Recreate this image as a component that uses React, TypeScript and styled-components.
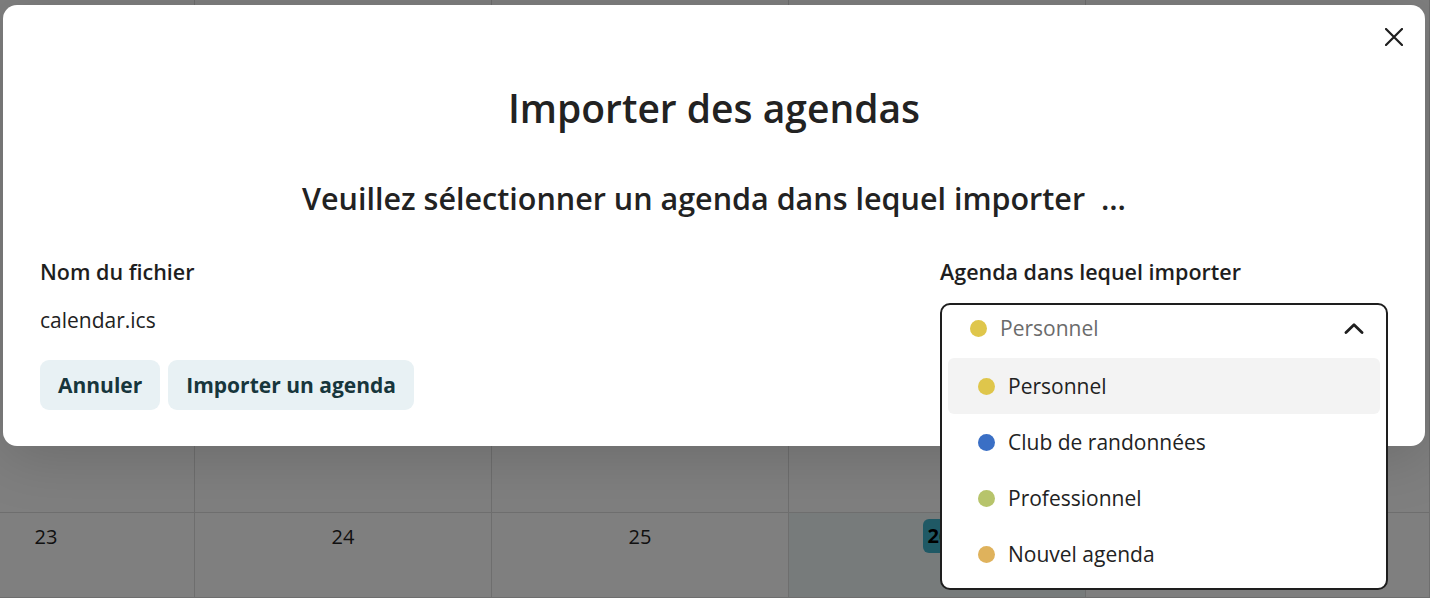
import styled, { createGlobalStyle } from 'styled-components'

const GlobalStyle = createGlobalStyle`
  html, body {
    margin: 0;
    padding: 0;
    background: #ffffff;
  }
  body {
    font-family: 'Open Sans', 'Noto Sans', sans-serif;
    color: #1e1e1e;
  }
  * {
    box-sizing: border-box;
  }
`

type Agenda = { name: string; color: string }

const agendas: Agenda[] = [
  { name: 'Personnel', color: '#dfc64b' },
  { name: 'Club de randonnées', color: '#3a6fc5' },
  { name: 'Professionnel', color: '#b7c46b' },
  { name: 'Nouvel agenda', color: '#dfb25c' },
]

// visible part of the week: the last column only shows its left edge
const days: (number | null)[] = [23, 24, 25, 26, null]
const today = 26

/* calendar behind the dialog */

const Page = styled.div`
  position: relative;
  width: 100vw;
  height: 100vh;
  overflow: hidden;
`

const Calendar = styled.div`
  display: grid;
  grid-template-columns: repeat(4, 297px) 1fr;
  grid-template-rows: 513px 1fr;
  height: 100%;
  margin-left: -102px;
`

const Cell = styled.div<{ $today?: boolean }>`
  display: flex;
  justify-content: center;
  align-items: flex-start;
  padding-top: 12px;
  border-right: 1px solid #dcdcdc;
  border-bottom: 1px solid #dcdcdc;
  background: ${({ $today }) => ($today ? '#eef6f7' : '#ffffff')};
`

const DayNumber = styled.span<{ $today?: boolean }>`
  font-family: 'Open Sans', sans-serif;
  font-size: 20px;
  line-height: 24px;
  color: #222;
  ${({ $today }) =>
    $today &&
    `
    margin-top: -6px;
    margin-left: 4px;
    padding: 5px 5px;
    border-radius: 6px;
    background: #3eb3cb;
    font-weight: 700;
    color: #000;
  `}
`

/* dialog */

const Backdrop = styled.div`
  position: absolute;
  inset: 0;
  background: rgba(0, 0, 0, 0.5);
  padding: 5px 5px 0 3px;
`

const Dialog = styled.div`
  position: relative;
  height: 441px;
  background: #ffffff;
  border-radius: 14px;
  box-shadow: 0 10px 60px rgba(0, 0, 0, 0.16);
  padding: 79px 37px 36px 37px;
  display: flex;
  flex-direction: column;
`

const CloseButton = styled.button`
  position: absolute;
  top: 20px;
  right: 19px;
  width: 24px;
  height: 24px;
  padding: 0;
  border: none;
  background: none;
  display: flex;
  align-items: center;
  justify-content: center;
  cursor: pointer;
`

const Title = styled.h2`
  margin: 0;
  text-align: center;
  font-size: 39px;
  line-height: 48px;
  font-weight: 600;
  color: #222;
`

const Subtitle = styled.h3`
  margin: 46px 0 0;
  text-align: center;
  font-size: 30.5px;
  line-height: 40px;
  font-weight: 600;
  color: #222;
  white-space: pre;
`

const Columns = styled.div`
  margin-top: 40px;
  display: flex;
  justify-content: space-between;
`

const Column = styled.div<{ $width?: number }>`
  display: flex;
  flex-direction: column;
  width: ${({ $width }) => ($width ? `${$width}px` : 'auto')};
`

const Label = styled.div`
  font-size: 21.5px;
  line-height: 28px;
  font-weight: 600;
  color: #1e1e1e;
`

const FileName = styled.div`
  margin-top: 20px;
  font-size: 21px;
  line-height: 28px;
  color: #222;
`

const Actions = styled.div`
  margin-top: 26px;
  display: flex;
  gap: 8px;
`

const Button = styled.button`
  height: 50px;
  padding: 0 18px;
  border: none;
  border-radius: 9px;
  background: #e8f1f4;
  color: #17363c;
  font-family: inherit;
  font-size: 21px;
  font-weight: 700;
  cursor: pointer;
`

/* agenda picker */

const SelectSlot = styled.div`
  position: relative;
  margin-top: 17px;
  height: 50px;
`

const SelectBox = styled.div`
  position: absolute;
  top: 0;
  left: 0;
  right: 0;
  background: #ffffff;
  border: 2px solid #1e1e1e;
  border-radius: 10px;
  z-index: 2;
`

const Trigger = styled.div`
  height: 46px;
  display: flex;
  align-items: center;
  padding: 0 22px 0 28px;
  gap: 13px;
  color: #6b6b6b;
  font-size: 21px;
`

const TriggerText = styled.span`
  flex: 1;
`

const Dot = styled.span<{ $color: string }>`
  width: 17px;
  height: 17px;
  border-radius: 50%;
  background: ${({ $color }) => $color};
  flex-shrink: 0;
`

const Options = styled.ul`
  list-style: none;
  margin: 0;
  padding: 7px 6px 6px;
`

const Option = styled.li<{ $active?: boolean }>`
  height: 56px;
  display: flex;
  align-items: center;
  gap: 13px;
  padding-left: 30px;
  border-radius: 6px;
  font-size: 21px;
  color: #222;
  background: ${({ $active }) => ($active ? '#f3f3f3' : 'transparent')};
`

const CloseIcon = () => (
  <svg width="18" height="18" viewBox="0 0 18 18" fill="none">
    <path d="M1 1L17 17M17 1L1 17" stroke="#1e1e1e" strokeWidth="2.2" strokeLinecap="round" />
  </svg>
)

const ChevronUp = () => (
  <svg width="20" height="11" viewBox="0 0 20 11" fill="none">
    <path d="M2 9.5L10 1.8L18 9.5" stroke="#1e1e1e" strokeWidth="2.8" strokeLinecap="round" strokeLinejoin="round" />
  </svg>
)

export default function App() {
  const selected = agendas[0]

  return (
    <>
      <GlobalStyle />
      <Page>
        <Calendar>
          {days.map((d, i) => (
            <Cell key={`prev-${i}`} />
          ))}
          {days.map((d, i) => (
            <Cell key={i} $today={d === today}>
              {d !== null && <DayNumber $today={d === today}>{d}</DayNumber>}
            </Cell>
          ))}
        </Calendar>

        <Backdrop>
          <Dialog role="dialog" aria-modal="true">
            <CloseButton aria-label="Fermer">
              <CloseIcon />
            </CloseButton>

            <Title>Importer des agendas</Title>
            <Subtitle>Veuillez sélectionner un agenda dans lequel importer  ...</Subtitle>

            <Columns>
              <Column>
                <Label>Nom du fichier</Label>
                <FileName>calendar.ics</FileName>
                <Actions>
                  <Button>Annuler</Button>
                  <Button>Importer un agenda</Button>
                </Actions>
              </Column>

              <Column $width={448}>
                <Label>Agenda dans lequel importer</Label>
                <SelectSlot>
                  <SelectBox>
                    <Trigger>
                      <Dot $color={selected.color} />
                      <TriggerText>{selected.name}</TriggerText>
                      <ChevronUp />
                    </Trigger>
                    <Options role="listbox">
                      {agendas.map((a) => (
                        <Option key={a.name} $active={a.name === selected.name}>
                          <Dot $color={a.color} />
                          {a.name}
                        </Option>
                      ))}
                    </Options>
                  </SelectBox>
                </SelectSlot>
              </Column>
            </Columns>
          </Dialog>
        </Backdrop>
      </Page>
    </>
  )
}
